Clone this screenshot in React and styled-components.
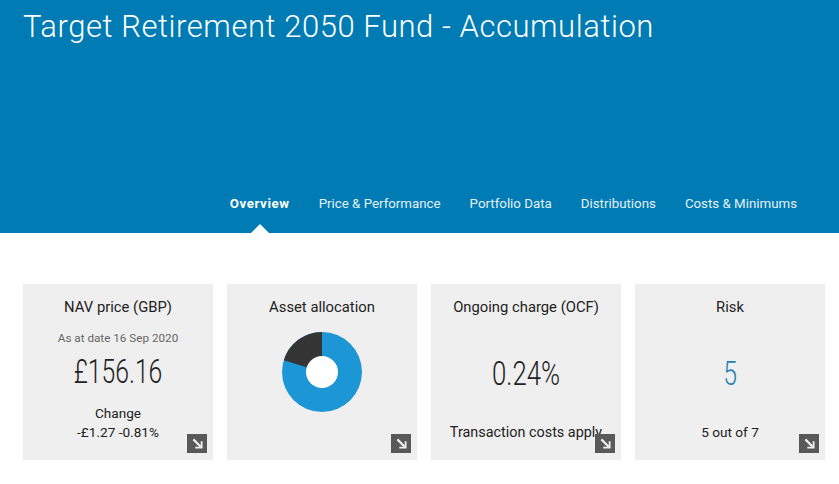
import React from 'react';
import styled, { createGlobalStyle } from 'styled-components';

const tabs = ['Overview', 'Price & Performance', 'Portfolio Data', 'Distributions', 'Costs & Minimums'];

function ArrowLink() {
    return (
        <ArrowBox>
            <svg width="11" height="11" viewBox="0 0 12 12" fill="none">
                <path d="M1.5 1.5 L9.5 9.5" stroke="#eee" strokeWidth="2.4" />
                <path d="M10.5 3.5 V10.5 H3.5" stroke="#eee" strokeWidth="2" />
            </svg>
        </ArrowBox>
    );
}

function Donut() {
    return (
        <DonutHolder>
            <svg width="80" height="80" viewBox="0 0 80 80">
                <circle cx="40" cy="40" r="40" fill="#1d96d6" />
                <path d="M40 40 L40 0 A40 40 0 0 0 1.75 28.3 Z" fill="#353535" />
                <circle cx="40" cy="40" r="16" fill="#fff" />
            </svg>
        </DonutHolder>
    );
}

function App() {
    return (
        <>
            <GlobalStyle />
            <Hero>
                <FundTitle>Target Retirement 2050 Fund - Accumulation</FundTitle>
                <TabBar>
                    {tabs.map((tab, i) => (
                        <Tab key={tab} $active={i === 0}>{tab}</Tab>
                    ))}
                </TabBar>
            </Hero>
            <Cards>
                <Card>
                    <CardTitle>NAV price (GBP)</CardTitle>
                    <AsAt>As at date 16 Sep 2020</AsAt>
                    <BigValue $top={7}>£156.16</BigValue>
                    <Foot $top={12}>Change<br />-£1.27 -0.81%</Foot>
                    <ArrowLink />
                </Card>
                <Card>
                    <CardTitle>Asset allocation</CardTitle>
                    <Donut />
                    <ArrowLink />
                </Card>
                <Card>
                    <CardTitle>Ongoing charge (OCF)</CardTitle>
                    <BigValue $top={38} $squeeze={0.78}>0.24%</BigValue>
                    <Foot $top={29} $large>Transaction costs apply</Foot>
                    <ArrowLink />
                </Card>
                <Card>
                    <CardTitle>Risk</CardTitle>
                    <BigValue $top={38} $accent>5</BigValue>
                    <Foot $top={29}>5 out of 7</Foot>
                    <ArrowLink />
                </Card>
            </Cards>
        </>
    );
}

const GlobalStyle = createGlobalStyle`
    html, body {
        margin: 0;
        padding: 0;
        background: #fff;
        font-family: Roboto, "Liberation Sans", sans-serif;
        color: #222;
    }
`;

const Hero = styled.header`
    height: 233px;
    background: #007bb3;
    display: flex;
    flex-direction: column;
    justify-content: space-between;
    box-sizing: border-box;
    padding: 8px 0 0 23px;
`;

const FundTitle = styled.h1`
    margin: 0;
    font-size: 31px;
    line-height: 38px;
    font-weight: 300;
    color: #fff;
    letter-spacing: 0.55px;
`;

const TabBar = styled.nav`
    display: flex;
    justify-content: flex-end;
    align-items: flex-end;
    gap: 29px;
    padding-right: 42px;
`;

const Tab = styled.a`
    position: relative;
    font-size: 13.3px;
    letter-spacing: ${(p) => (p.$active ? 0.6 : 0)}px;
    line-height: 16px;
    padding-bottom: 21px;
    color: ${(p) => (p.$active ? '#fff' : '#e4f0f6')};
    font-weight: ${(p) => (p.$active ? 700 : 400)};
    ${(p) => p.$active && `
        &::after {
            content: '';
            position: absolute;
            left: 50%;
            bottom: 0;
            margin-left: -9px;
            border: 9px solid transparent;
            border-top: 0;
            border-bottom-color: #fff;
        }
    `}
`;

const Cards = styled.section`
    display: grid;
    grid-template-columns: repeat(4, 190px);
    gap: 14px;
    padding: 51px 0 0 23px;
`;

const Card = styled.article`
    position: relative;
    height: 176px;
    box-sizing: border-box;
    padding-top: 14px;
    background: #efefef;
    text-align: center;
`;

const CardTitle = styled.h2`
    margin: 0;
    font-size: 14.8px;
    line-height: 18px;
    font-weight: 400;
    color: #222;
`;

const AsAt = styled.div`
    margin-top: 15px;
    font-size: 11.7px;
    line-height: 14px;
    color: #666;
`;

// no condensed family installed, so the big figures are Roboto Light squeezed
const BigValue = styled.div`
    margin-top: ${(p) => p.$top}px;
    font-size: 33px;
    line-height: 40px;
    font-weight: 300;
    transform: scaleX(${(p) => p.$squeeze || 0.75});
    color: ${(p) => (p.$accent ? '#2582b4' : '#222')};
`;

const Foot = styled.div`
    margin-top: ${(p) => p.$top}px;
    font-size: ${(p) => (p.$large ? 14.4 : 13.6)}px;
    line-height: 19px;
    color: #222;
`;

const DonutHolder = styled.div`
    display: flex;
    justify-content: center;
    margin-top: 16px;
`;

const ArrowBox = styled.a`
    position: absolute;
    right: 6px;
    bottom: 7px;
    width: 20px;
    height: 19px;
    display: flex;
    align-items: center;
    justify-content: center;
    background: #595959;
`;

export default App;
